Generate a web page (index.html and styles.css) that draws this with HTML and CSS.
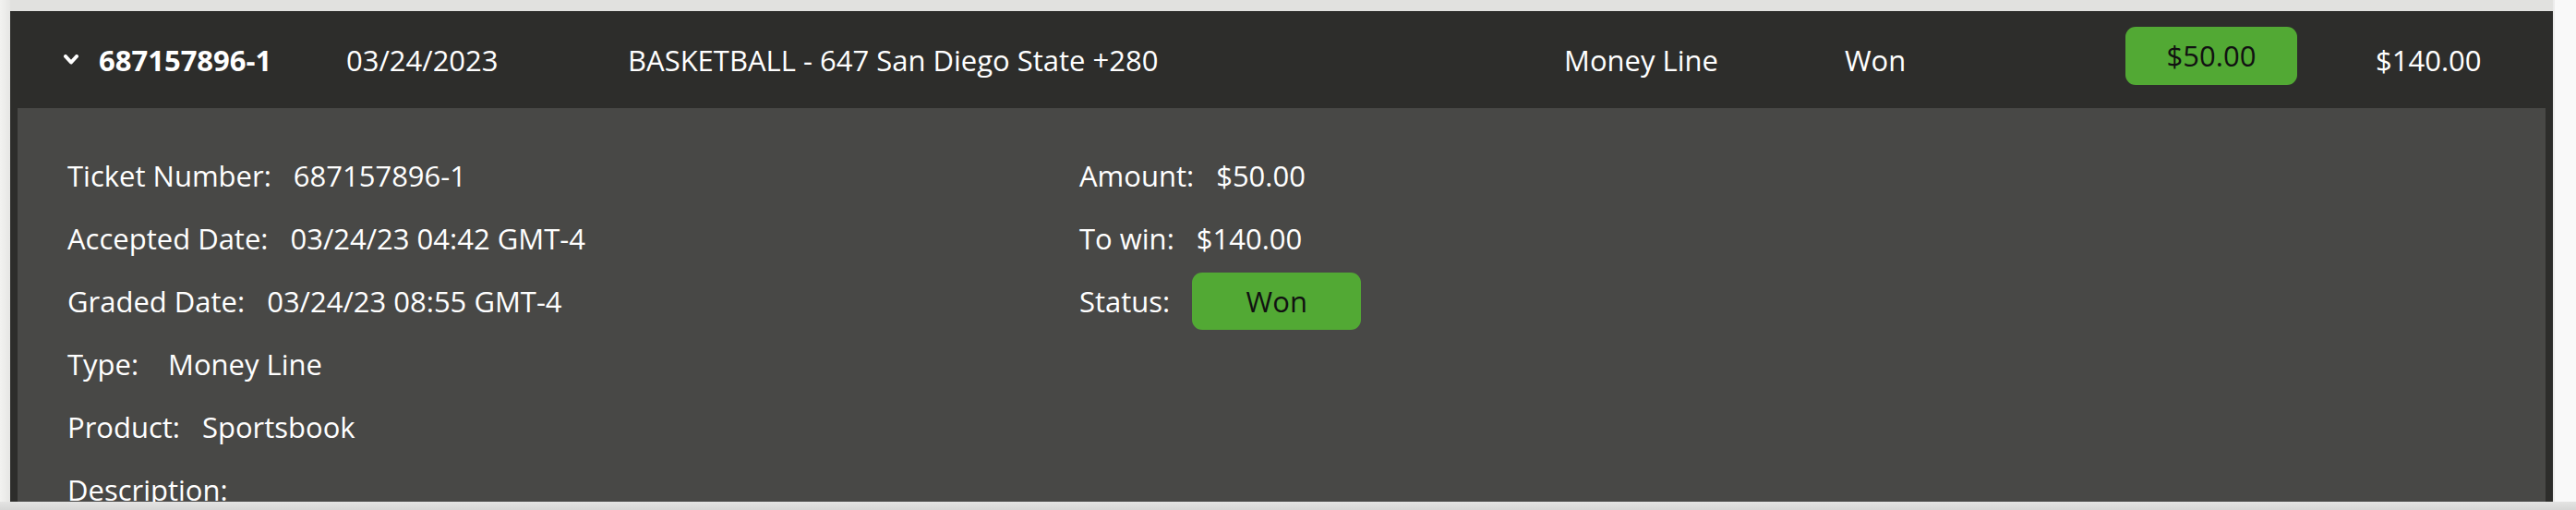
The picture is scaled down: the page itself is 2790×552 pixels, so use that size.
FILE: index.html
```html
<!DOCTYPE html>
<html lang="en">
<head>
    <meta charset="UTF-8">
    <meta name="viewport" content="width=device-width, initial-scale=1.0">
    <title>Wager History</title>
    <link rel="stylesheet" href="styles.css">
</head>
<body>
    <div class="screen">
        <main class="page">
            <!-- Ticket row -->
            <div class="ticket">
                <div class="ticket-head">
                    <div class="cell cell-id">
                        <svg class="chevron" width="16" height="12" viewBox="0 0 16 12">
                            <polyline points="2,2 8,8.5 14,2" fill="none" stroke="#fff" stroke-width="4" stroke-linecap="round" stroke-linejoin="round"/>
                        </svg>
                        <span>687157896-1</span>
                    </div>
                    <div class="cell">03/24/2023</div>
                    <div class="cell">BASKETBALL - 647 San Diego State +280</div>
                    <div class="cell">Money Line</div>
                    <div class="cell">Won</div>
                    <div class="cell"><span class="pill pill-head">$50.00</span></div>
                    <div class="cell">$140.00</div>
                </div>

                <!-- Ticket details -->
                <div class="ticket-body">
                    <div class="detail-col">
                        <div class="detail-row"><span class="label">Ticket Number:</span><span>687157896-1</span></div>
                        <div class="detail-row"><span class="label">Accepted Date:</span><span>03/24/23 04:42 GMT-4</span></div>
                        <div class="detail-row"><span class="label">Graded Date:</span><span>03/24/23 08:55 GMT-4</span></div>
                        <div class="detail-row"><span class="label">Type:</span><span>Money Line</span></div>
                        <div class="detail-row"><span class="label">Product:</span><span>Sportsbook</span></div>
                        <div class="detail-row"><span class="label">Description:</span><span></span></div>
                    </div>
                    <div class="detail-col">
                        <div class="detail-row"><span class="label">Amount:</span><span>$50.00</span></div>
                        <div class="detail-row"><span class="label">To win:</span><span>$140.00</span></div>
                        <div class="detail-row"><span class="label">Status:</span><span class="pill pill-status">Won</span></div>
                    </div>
                </div>
            </div>
        </main>
        <div class="scroll-track"></div>
    </div>
    <div class="bottom-shade"></div>
</body>
</html>
```

FILE: styles.css
```css
:root {
    --page-bg: #e1e1df;
    --head-bg: #2d2d2b;
    --body-bg: #484846;
    --green: #52a934;
    --text: #ffffff;
}

body {
    margin: 0;
    font-family: "Open Sans", "Liberation Sans", sans-serif;
    font-size: 31px;
    color: var(--text);
    height: 552px;
    overflow: hidden;
}

.screen {
    display: flex;
    height: 543px;
    overflow: hidden;
}

/* Area principal */
.page {
    flex: 1;
    background: linear-gradient(to right, #f2f2f0 0, #e6e6e4 11px, var(--page-bg) 11px);
    padding: 12px 0 0 11px;
    overflow: hidden;
}

.scroll-track {
    width: 23px;
    background: #f9f9f9;
    border-left: 2px solid #ececec;
}

.bottom-shade {
    height: 9px;
    background: linear-gradient(to bottom, #e4e4e3, #d6d6d5);
}

.ticket {
    background: var(--head-bg);
    padding: 0 8px;
    height: 100%;
}

/* Cabecera del ticket */
.ticket-head {
    display: grid;
    grid-template-columns: 364px 305px 1014px 304px 304px 271px 1fr;
    align-items: center;
    height: 105px;
    margin: 0 -8px;
}

.cell {
    white-space: nowrap;
}

.cell-id {
    display: flex;
    align-items: center;
    gap: 22px;
    padding-left: 58px;
    font-weight: 700;
}

.chevron {
    display: block;
}

.pill {
    display: inline-flex;
    align-items: center;
    justify-content: center;
    background: var(--green);
    color: #111;
    border-radius: 11px;
}

.pill-head {
    width: 186px;
    height: 63px;
    margin-bottom: 9px;
}

.pill-status {
    width: 183px;
    height: 62px;
}

/* Detalles */
.ticket-body {
    background: var(--body-bg);
    display: grid;
    grid-template-columns: 1096px 1fr;
    padding: 39px 54px 0;
    height: 100%;
}

.detail-row {
    display: flex;
    align-items: center;
    gap: 24px;
    height: 68px;
    white-space: nowrap;
}

.detail-row .label {
    min-width: 85px;
}
```
